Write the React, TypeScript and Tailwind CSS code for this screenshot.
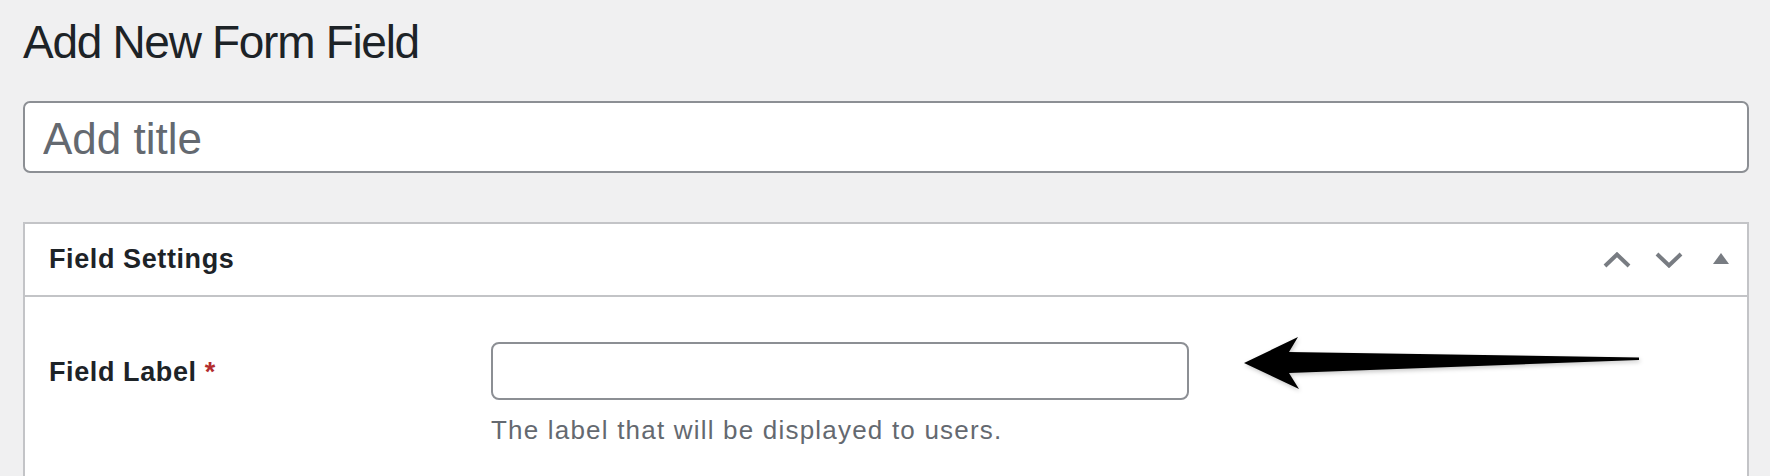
const font = "font-['Liberation_Sans',Arial,sans-serif]"

function ChevronUp() {
  return (
    <svg width="28" height="16" viewBox="0 0 28 16" fill="none">
      <path d="M2 14 L14 2.5 L26 14" stroke="#787c82" strokeWidth="4" strokeLinejoin="miter" />
    </svg>
  )
}

function ChevronDown() {
  return (
    <svg width="28" height="16" viewBox="0 0 28 16" fill="none">
      <path d="M2 2 L14 13.5 L26 2" stroke="#787c82" strokeWidth="4" strokeLinejoin="miter" />
    </svg>
  )
}

function TriangleUp() {
  return (
    <svg width="16" height="11" viewBox="0 0 16 11">
      <polygon points="0,11 8,0 16,11" fill="#787c82" />
    </svg>
  )
}

function Arrow() {
  return (
    <svg
      width="420"
      height="70"
      viewBox="0 0 420 70"
      className="drop-shadow-[1px_2px_2px_rgba(0,0,0,0.22)]"
    >
      <polygon
        points="10,33 64,7 55,22 405,27.5 405,30 55,43 65,59"
        fill="#000"
      />
    </svg>
  )
}

export default function App() {
  return (
    <div className={`${font} min-h-screen w-full bg-[#f0f0f1] pl-[23px] pr-[21px] pt-[12px] text-[#1d2327]`}>
      {/* Page title */}
      <h1 className="text-[46px] leading-[60px] font-normal tracking-[-1.3px] text-[#1d2327]">
        Add New Form Field
      </h1>

      {/* Title input */}
      <input
        type="text"
        placeholder="Add title"
        className="mt-[29px] block h-[72px] w-full rounded-[7px] border-2 border-[#8c8f94] bg-white pl-[18px] pt-[4px] text-[44px] text-[#1d2327] outline-none placeholder:text-[#646970]"
      />

      {/* Postbox */}
      <div className="mt-[49px] border-2 border-[#c3c4c7] bg-white">
        {/* Header */}
        <div className="flex h-[73px] items-center justify-between border-b-2 border-[#c3c4c7] pl-[24px]">
          <h2 className="text-[27px] leading-none font-bold tracking-[0.6px] text-[#1d2327]">
            Field Settings
          </h2>
          <div className="flex h-full items-center">
            <button className="flex h-full w-[52px] items-center justify-center">
              <ChevronUp />
            </button>
            <button className="flex h-full w-[52px] items-center justify-center">
              <ChevronDown />
            </button>
            <button className="flex h-full w-[52px] items-center justify-center pb-[3px]">
              <TriangleUp />
            </button>
          </div>
        </div>

        {/* Body */}
        <div className="relative pl-[24px] pt-[45px] pb-[40px]">
          <div className="grid grid-cols-[442px_1fr]">
            <div className="flex h-[58px] items-center pt-[3px]">
              <label className="text-[27px] leading-none font-bold tracking-[0.6px] text-[#1d2327]">
                Field Label <span className="text-[#b32d2e]">*</span>
              </label>
            </div>
            <div>
              <input
                type="text"
                className="block h-[58px] w-[698px] rounded-[8px] border-2 border-[#8c8f94] bg-white px-[16px] text-[26px] outline-none"
              />
              <p className="mt-[12px] text-[26px] leading-[36px] tracking-[1.2px] text-[#646970]">
                The label that will be displayed to users.
              </p>
            </div>
          </div>

          {/* Annotation arrow */}
          <div className="absolute left-[1209px] top-[33px]">
            <Arrow />
          </div>
        </div>
      </div>
    </div>
  )
}
